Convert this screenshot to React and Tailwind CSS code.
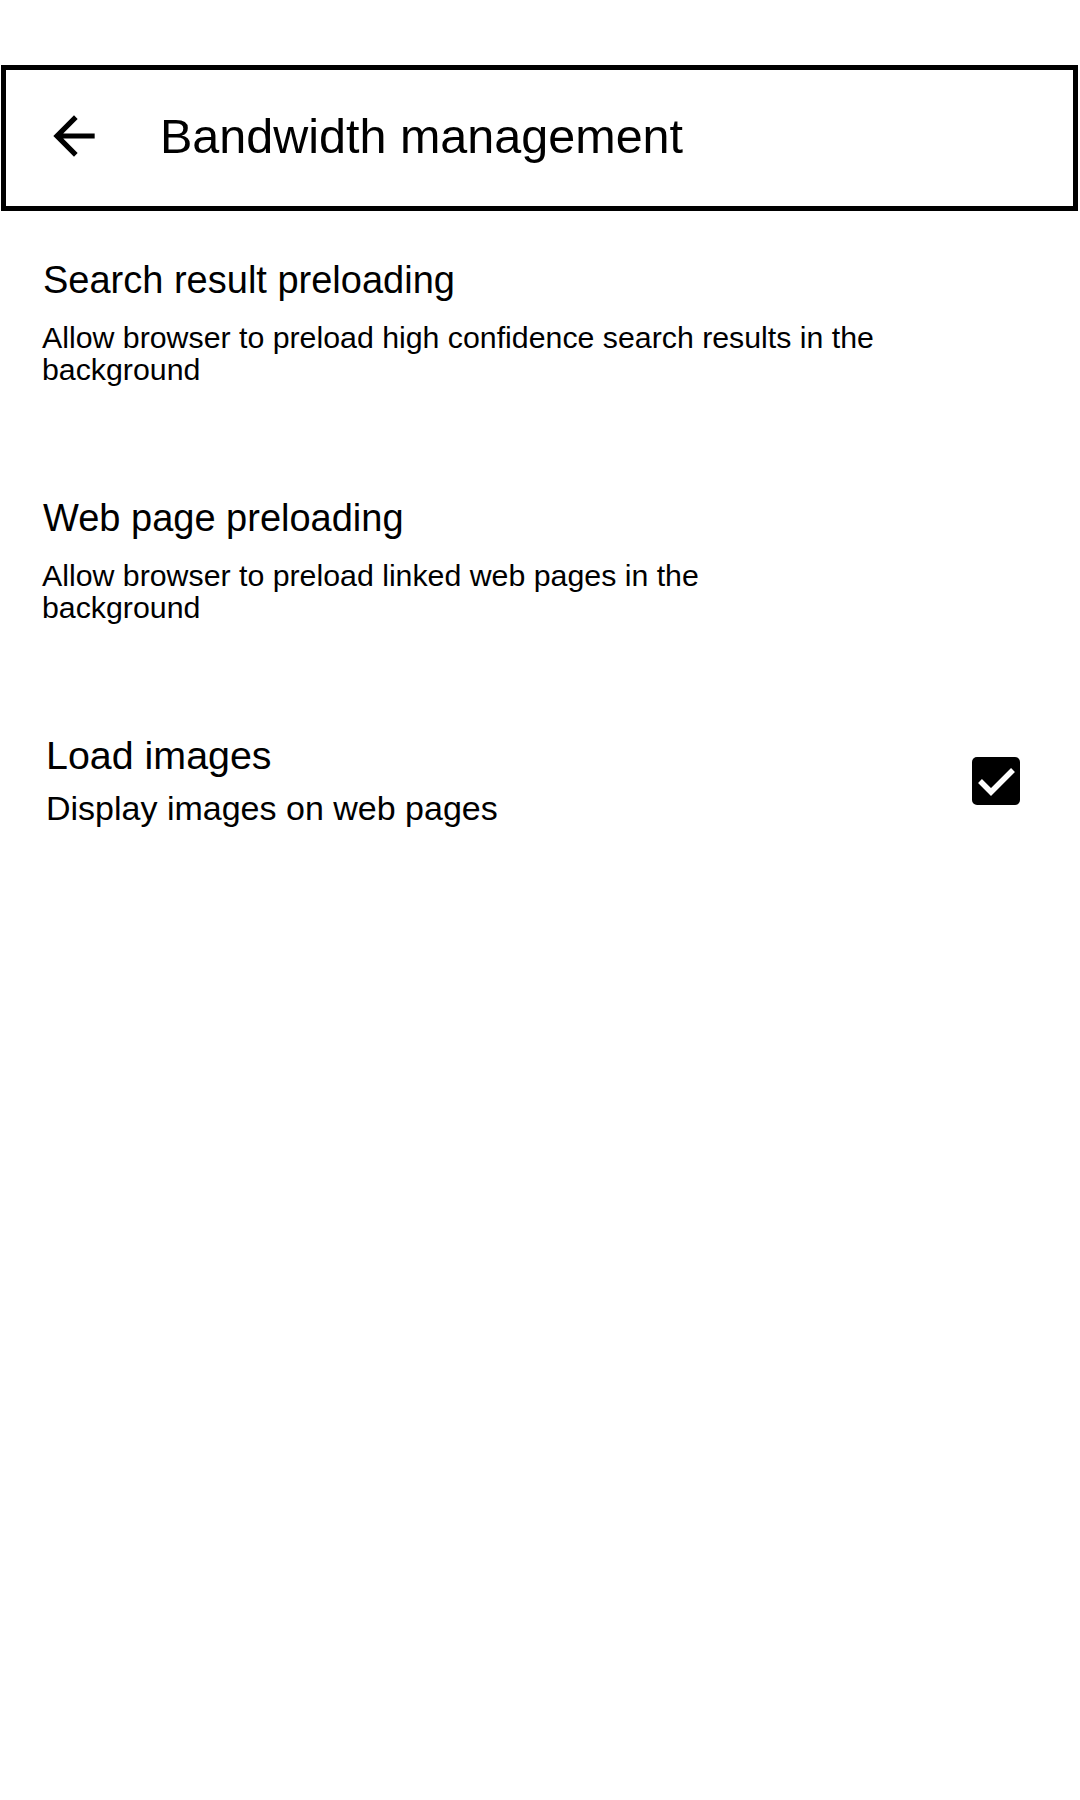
import React from "react";

function BackArrow() {
  return (
    <svg width="62" height="62" viewBox="0 0 24 24" className="mb-[4px] shrink-0">
      <path d="M20 11H7.83l5.59-5.59L12 4l-8 8 8 8 1.41-1.41L7.83 13H20v-2z" fill="#000" />
    </svg>
  );
}

function Checkbox() {
  return (
    <div className="w-[48px] h-[48px] rounded-[5px] bg-black flex items-center justify-center shrink-0">
      <svg width="48" height="48" viewBox="0 0 48 48">
        <path d="M8 24 L19 35 L41 13" fill="none" stroke="#fff" strokeWidth="5.5" strokeLinecap="butt" strokeLinejoin="miter" />
      </svg>
    </div>
  );
}

export default function App() {
  return (
    <div className="w-[1080px] min-h-[1800px] bg-white text-black font-['Liberation_Sans',Arial,sans-serif]">
      <div className="pt-[65px] pl-[1px] pr-[2px]">
        <header className="h-[146px] border-[5px] border-black flex items-center">
          <div className="ml-[37px] flex items-center">
            <BackArrow />
          </div>
          <h1 className="ml-[55px] mb-[5px] text-[48.5px] leading-[56px] font-normal">Bandwidth management</h1>
        </header>
      </div>

      <section className="pl-[42px] mt-[47px]">
        <h2 className="pl-[1px] text-[38px] leading-[44px] font-normal">Search result preloading</h2>
        <p className="mt-[20px] max-w-[845px] text-[30.3px] leading-[32px]">
          Allow browser to preload high confidence search results in the background
        </p>
      </section>

      <section className="pl-[42px] mt-[110px]">
        <h2 className="pl-[1px] text-[38px] leading-[44px] font-normal">Web page preloading</h2>
        <p className="mt-[20px] max-w-[740px] text-[30.3px] leading-[32px]">
          Allow browser to preload linked web pages in the background
        </p>
      </section>

      <section className="pl-[46px] pr-[60px] mt-[109px] flex items-center justify-between">
        <div>
          <h2 className="text-[39.4px] leading-[44px] font-normal">Load images</h2>
          <p className="mt-[11px] text-[34px] leading-[40px]">Display images on web pages</p>
        </div>
        <Checkbox />
      </section>
    </div>
  );
}
